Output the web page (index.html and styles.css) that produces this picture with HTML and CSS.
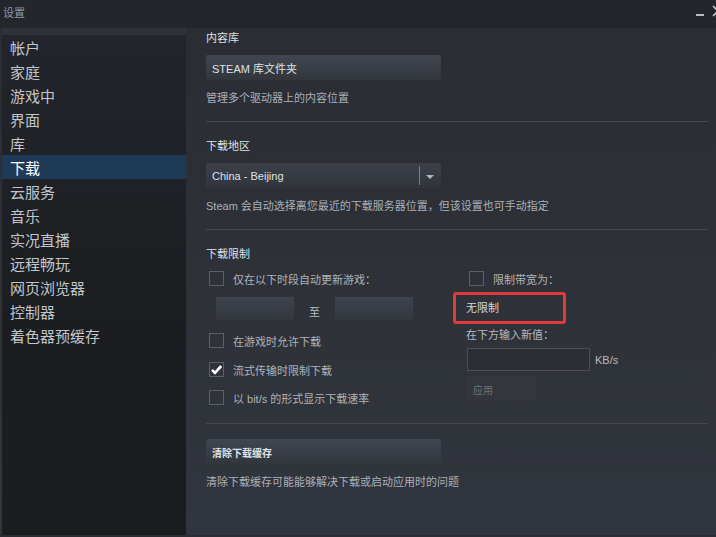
FILE: index.html
```html
<!DOCTYPE html>
<html lang="zh-CN">
<head>
    <meta charset="UTF-8">
    <title>设置</title>
    <link rel="stylesheet" href="styles.css">
</head>
<body>
    <div class="window">
        <div class="titlebar">
            <span class="title">设置</span>
            <div class="controls">
                <span class="min"></span>
                <svg class="close" width="12" height="12" viewBox="0 0 12 12">
                    <path d="M1 1 L11 11 M11 1 L1 11" stroke="#c3c7cb" stroke-width="1.6" fill="none"/>
                </svg>
            </div>
        </div>

        <div class="main">
            <div class="sidebar">
                <div class="sidebar-top"></div>
                <ul class="nav">
                    <li>帐户</li>
                    <li>家庭</li>
                    <li>游戏中</li>
                    <li>界面</li>
                    <li>库</li>
                    <li class="active">下载</li>
                    <li>云服务</li>
                    <li>音乐</li>
                    <li>实况直播</li>
                    <li>远程畅玩</li>
                    <li>网页浏览器</li>
                    <li>控制器</li>
                    <li>着色器预缓存</li>
                </ul>
            </div>

            <div class="content">
                <h3 class="heading first">内容库</h3>
                <button class="btn">STEAM 库文件夹</button>
                <p class="desc">管理多个驱动器上的内容位置</p>

                <div class="sep"></div>

                <h3 class="heading">下载地区</h3>
                <div class="dropdown">
                    <span class="dd-value">China - Beijing</span>
                    <span class="dd-divider"></span>
                    <span class="dd-arrow"></span>
                </div>
                <p class="desc">Steam 会自动选择离您最近的下载服务器位置，但该设置也可手动指定</p>

                <div class="sep"></div>

                <h3 class="heading">下载限制</h3>
                <div class="limits">
                    <div class="col-left">
                        <div class="check-row r1">
                            <span class="box"></span>
                            <span class="check-label">仅在以下时段自动更新游戏：</span>
                        </div>
                        <div class="time-row">
                            <span class="time-input"></span>
                            <span class="to">至</span>
                            <span class="time-input"></span>
                        </div>
                        <div class="check-row r2">
                            <span class="box"></span>
                            <span class="check-label">在游戏时允许下载</span>
                        </div>
                        <div class="check-row r3">
                            <span class="box">
                                <svg width="13" height="13" viewBox="0 0 13 13">
                                    <path d="M2 6.8 L5 9.8 L11.2 3" stroke="#ffffff" stroke-width="2.6" fill="none"/>
                                </svg>
                            </span>
                            <span class="check-label">流式传输时限制下载</span>
                        </div>
                        <div class="check-row r4">
                            <span class="box"></span>
                            <span class="check-label">以 bit/s 的形式显示下载速率</span>
                        </div>
                    </div>

                    <div class="col-right">
                        <div class="check-row r1 indent">
                            <span class="box"></span>
                            <span class="check-label">限制带宽为：</span>
                        </div>
                        <div class="highlight">无限制</div>
                        <div class="hint">在下方输入新值：</div>
                        <div class="rate-row">
                            <span class="rate-input"></span>
                            <span class="unit">KB/s</span>
                        </div>
                        <button class="apply">应用</button>
                    </div>
                </div>

                <div class="sep sep-low"></div>

                <button class="btn btn-clear">清除下载缓存</button>
                <p class="desc">清除下载缓存可能能够解决下载或启动应用时的问题</p>
            </div>
        </div>
        <div class="bottom-edge"></div>
    </div>
</body>
</html>
```

FILE: styles.css
```css
body {
    margin: 0;
    padding: 0;
    background-color: #2a2d33;
    font-family: "Liberation Sans", "Noto Sans CJK SC", sans-serif;
    overflow: hidden;
}
.window {
    width: 716px;
    height: 537px;
    display: flex;
    flex-direction: column;
}
.titlebar {
    height: 28px;
    background-color: #23262b;
    display: flex;
    justify-content: space-between;
    align-items: center;
}
.title {
    padding-left: 3px;
    font-size: 11px;
    color: #8e99a6;
    margin-top: -4px;
}
.controls {
    display: flex;
    align-items: center;
    gap: 8px;
    margin-right: -8px;
    margin-top: -6px;
}
.min {
    display: block;
    width: 8px;
    height: 2px;
    background-color: #b9bdc1;
    margin-top: 8px;
}
.main {
    flex: 1;
    display: flex;
    background: linear-gradient(#2a2d33, #31353d);
}
.sidebar {
    width: 184px;
    margin-left: 2px;
    background: linear-gradient(#22252b, #1b1d20 60%);
}
.sidebar-top {
    height: 7px;
    background-color: #2e3239;
}
.nav {
    list-style: none;
    margin: 0;
    padding: 0;
}
.nav li {
    height: 24px;
    line-height: 28px;
    padding-left: 8px;
    font-size: 15px;
    color: #c2c6ca;
}
.nav li.active {
    background-color: #1f3a57;
    color: #ffffff;
}
.content {
    flex: 1;
    padding: 0 8px 0 20px;
}
.heading {
    margin: 16px 0 0 0;
    height: 16px;
    line-height: 17px;
    font-size: 11px;
    font-weight: normal;
    color: #dde1e4;
}
.heading.first {
    margin-top: 2px;
}
.btn {
    display: block;
    width: 235px;
    height: 25px;
    margin-top: 9px;
    padding: 1px 0 0 6px;
    border: none;
    border-radius: 2px;
    background: linear-gradient(#42464f, #31353c);
    color: #dfe2e5;
    font-family: inherit;
    font-size: 11px;
    text-align: left;
}
.desc {
    margin: 10px 0 0 0;
    height: 16px;
    line-height: 17px;
    font-size: 11px;
    color: #aab0b6;
}
.sep {
    height: 1px;
    margin-top: 15px;
    background-color: #45494f;
}
.sep-low {
    margin-top: 18px;
}
.dropdown {
    width: 235px;
    height: 25px;
    margin-top: 9px;
    display: flex;
    align-items: center;
    border-radius: 2px;
    background: linear-gradient(#3c4048, #30343b);
}
.dd-value {
    flex: 1;
    padding: 1px 0 0 6px;
    font-size: 11px;
    color: #dfe2e5;
}
.dd-divider {
    width: 1px;
    height: 19px;
    background-color: #7c8188;
}
.dd-arrow {
    width: 0;
    height: 0;
    margin: 2px 7px 0 6px;
    border-left: 4px solid transparent;
    border-right: 4px solid transparent;
    border-top: 4px solid #b4b8bd;
}
.limits {
    display: flex;
}
.col-left {
    width: 247px;
}
.col-right {
    flex: 1;
}
.check-row {
    height: 16px;
    display: flex;
    align-items: center;
    padding-left: 3px;
}
.check-row.r1 { margin-top: 8px; }
.check-row.r2 { margin-top: 12px; }
.check-row.r3 { margin-top: 13px; }
.check-row.r4 { margin-top: 12px; }
.check-row.indent {
    padding-left: 16px;
}
.box {
    width: 13px;
    height: 13px;
    border: 1px solid #5b5f66;
    display: flex;
    align-items: center;
    justify-content: center;
}
.check-label {
    margin-left: 9px;
    margin-top: 1px;
    font-size: 11px;
    color: #aeb3b8;
}
.time-row {
    display: flex;
    align-items: center;
    margin-top: 11px;
    padding-left: 10px;
}
.time-input {
    width: 78px;
    height: 23px;
    background: linear-gradient(#3e424a, #33373e);
}
.to {
    width: 41px;
    text-align: center;
    font-size: 11px;
    color: #b6bbc0;
    margin-top: 4px;
}
.highlight {
    width: 97px;
    height: 26px;
    margin-top: 6px;
    padding-left: 10px;
    line-height: 27px;
    border: 3px solid #e2393e;
    border-radius: 3px;
    font-size: 11px;
    color: #d4d8dc;
}
.hint {
    height: 16px;
    line-height: 17px;
    margin-top: 3px;
    padding-left: 13px;
    font-size: 11px;
    color: #b6bbc0;
}
.rate-row {
    display: flex;
    align-items: center;
    margin-top: 5px;
    padding-left: 14px;
}
.rate-input {
    width: 121px;
    height: 21px;
    border: 1px solid #4b5058;
    background-color: #2b2f35;
}
.unit {
    margin-left: 5px;
    font-size: 11px;
    color: #b6bbc0;
}
.apply {
    display: block;
    width: 70px;
    height: 25px;
    margin: 5px 0 0 13px;
    padding: 1px 0 0 7px;
    border: none;
    background-color: #33373d;
    color: #6e737a;
    font-family: inherit;
    font-size: 10px;
    text-align: left;
}
.btn-clear {
    margin-top: 15px;
    font-weight: bold;
    font-size: 10px;
}
.bottom-edge {
    height: 2px;
    background-color: #2a2e33;
}
```
